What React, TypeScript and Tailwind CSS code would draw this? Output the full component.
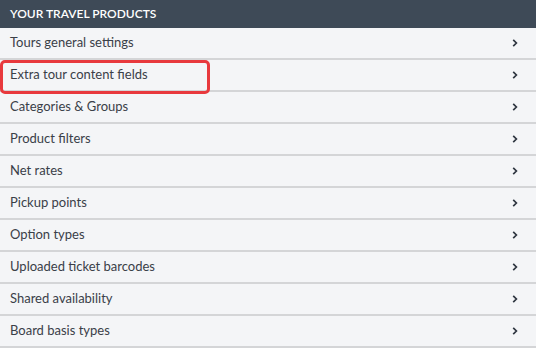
import React from 'react';

const items = [
  'Tours general settings',
  'Extra tour content fields',
  'Categories & Groups',
  'Product filters',
  'Net rates',
  'Pickup points',
  'Option types',
  'Uploaded ticket barcodes',
  'Shared availability',
  'Board basis types',
];

function Chevron() {
  return (
    <svg width="8" height="10" viewBox="0 0 8 10" className="text-[#2f3640]">
      <path d="M2.2 1.8 L5.4 5 L2.2 8.2" fill="none" stroke="currentColor" strokeWidth="1.7" />
    </svg>
  );
}

export default function App() {
  return (
    <div className="w-[536px] h-[348px] bg-white font-['Lato',sans-serif] overflow-hidden">
      <div className="h-[28px] bg-[#3e4a57] px-[10px] flex items-center text-white text-[12px] font-semibold uppercase">
        Your travel products
      </div>
      <ul>
        {items.map((label, i) => (
          <li
            key={label}
            className="relative h-[32px] bg-[#f4f5f7] border-b-2 border-[#d4d5d7] flex items-center justify-between pl-[10px] pr-[17px] text-[13px] text-[#3a4048]"
          >
            <span>{label}</span>
            <Chevron />
            {i === 1 && (
              <div className="absolute z-10 left-0 top-0 w-[210px] h-[34px] border-[3px] border-[#e8393d] rounded-[5px] pointer-events-none" />
            )}
          </li>
        ))}
      </ul>
    </div>
  );
}
